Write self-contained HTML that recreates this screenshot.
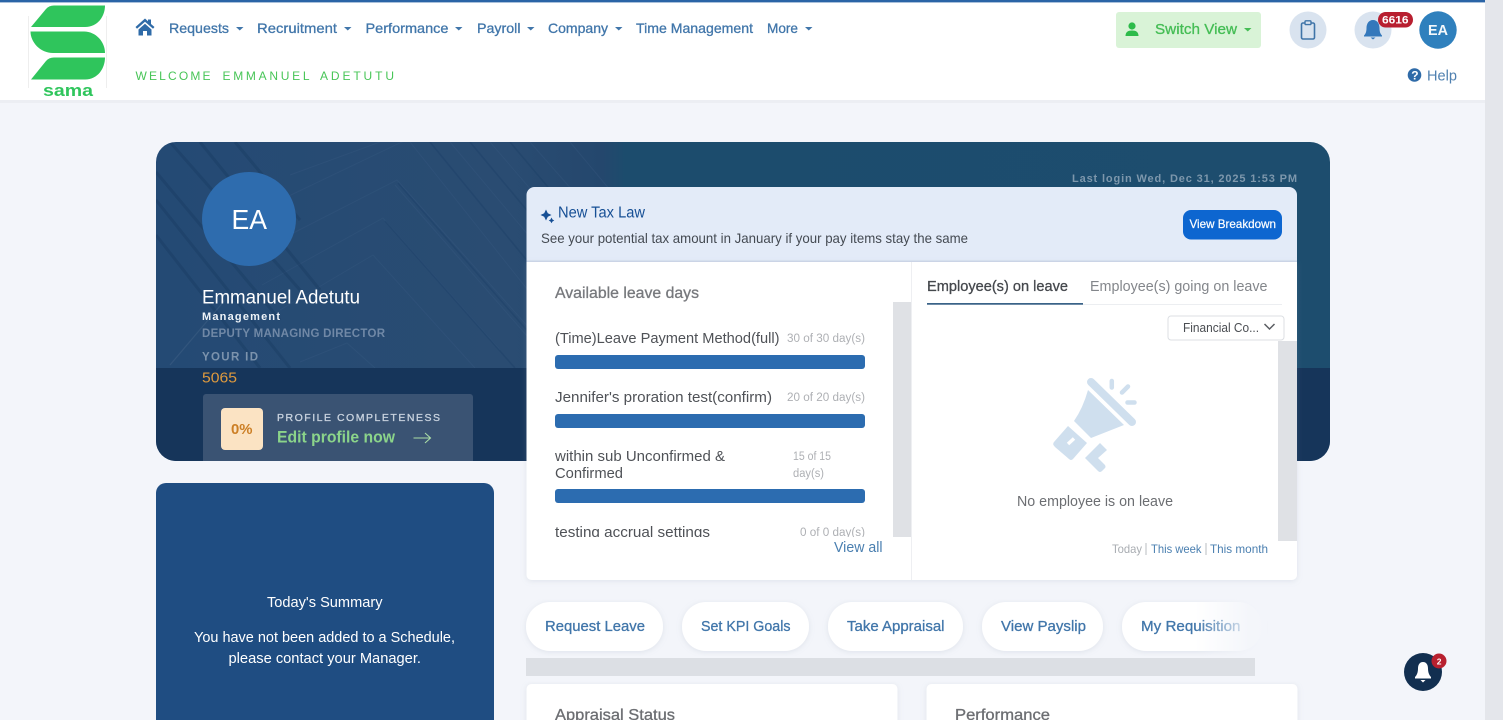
<!DOCTYPE html>
<html lang="en"><head><meta charset="utf-8"><title>Sama Dashboard</title>
<style>
html,body{margin:0;padding:0;width:1503px;height:720px;overflow:hidden;background:#f3f5fa}
svg{display:block;position:absolute;left:0;top:0}
text{font-family:"Liberation Sans",Arial,sans-serif;dominant-baseline:auto}
.m{stroke:currentColor;stroke-width:.3px}
.b{font-weight:bold}
</style></head><body>
<svg width="1503" height="720" viewBox="0 0 1503 720" xmlns="http://www.w3.org/2000/svg">
<defs>
<clipPath id="hero"><rect x="156" y="142" width="1174" height="319" rx="20"/></clipPath>
<clipPath id="list"><rect x="527" y="302" width="366" height="235"/></clipPath>
<clipPath id="pat"><path d="M156 142H605L660 210V368H156Z"/></clipPath>
<linearGradient id="fade" x1="0" x2="1" y1="0" y2="0"><stop offset="0" stop-color="#f3f5fa" stop-opacity="0"/><stop offset=".75" stop-color="#f3f5fa" stop-opacity=".9"/><stop offset="1" stop-color="#f3f5fa"/></linearGradient>
<linearGradient id="heroG" x1="0" x2="1" y1="0" y2="0"><stop offset="0" stop-color="#244a74"/><stop offset=".3" stop-color="#2a4c72"/><stop offset=".38" stop-color="#24476d"/><stop offset=".4" stop-color="#1c4c6d"/><stop offset="1" stop-color="#1d4d6e"/></linearGradient>
<filter id="sh" x="-5%" y="-5%" width="110%" height="115%"><feDropShadow dx="0" dy="1" stdDeviation="3" flood-color="#8a97ad" flood-opacity=".2"/></filter>
</defs>

<!-- page / scrollbar -->
<rect width="1503" height="720" fill="#f3f5fa"/>
<rect x="1485" width="18" height="720" fill="#e4e6eb"/>

<!-- top bar -->
<rect width="1485" height="100" fill="#fff"/>
<rect y="100" width="1485" height="3" fill="#eceef3"/>
<rect width="1485" height="2.4" fill="#2a64a6"/>

<!-- logo -->
<path d="M28.5 16V88M106.5 16V88" stroke="#eeeeee" stroke-width="1"/>
<path d="M31 27L46 9Q49 5.500 54 5.500H105C105 16 98 27 85 27Z" fill="#2fc55c"/>
<path d="M30.500 31.500H84C96 31.500 105 42 105 53H53C40 53 30.500 42 30.500 31.500Z" fill="#2fc55c"/>
<path d="M31 79.500L46 61Q49 57.500 54 57.500H105C105 68 98 79.500 85 79.500Z" fill="#2fc55c"/>
<text x="43" y="96" font-size="17" class="b" fill="#2fc55c" textLength="50" lengthAdjust="spacingAndGlyphs">sama</text>

<!-- nav -->
<path d="M145 18.500L135.500 27L137 28.700L145 21.700L153 28.700L154.500 27L151 24V19.500H148V21.300ZM138.500 29.500V35.500H143V31H147V35.500H151.500V29.500L145 23.700Z" fill="#2f6ba8"/>
<g font-size="14" fill="#4176aa" color="#4176aa" class="m">
<text x="169" y="33" textLength="60" lengthAdjust="spacingAndGlyphs">Requests</text>
<text x="257" y="33" textLength="80" lengthAdjust="spacingAndGlyphs">Recruitment</text>
<text x="365.500" y="33" textLength="83" lengthAdjust="spacingAndGlyphs">Performance</text>
<text x="477" y="33" textLength="43.500" lengthAdjust="spacingAndGlyphs">Payroll</text>
<text x="548" y="33" textLength="60" lengthAdjust="spacingAndGlyphs">Company</text>
<text x="636" y="33" textLength="117" lengthAdjust="spacingAndGlyphs">Time Management</text>
<text x="767" y="33" textLength="31" lengthAdjust="spacingAndGlyphs">More</text>
</g>
<g fill="#4176aa">
<path d="M236 27H243.500L239.750 30.500Z"/><path d="M344 27H351.500L347.750 30.500Z"/><path d="M455 27H462.500L458.750 30.500Z"/><path d="M527 27H534.500L530.750 30.500Z"/><path d="M615 27H622.500L618.750 30.500Z"/><path d="M805 27H812.500L808.750 30.500Z"/>
</g>
<g font-size="12" fill="#48c557">
<text x="135.500" y="80" textLength="75" lengthAdjust="spacing">WELCOME</text>
<text x="222.500" y="80" textLength="87" lengthAdjust="spacing">EMMANUEL</text>
<text x="320" y="80" textLength="74" lengthAdjust="spacing">ADETUTU</text>
</g>

<!-- header right -->
<rect x="1116" y="12" width="145" height="36" rx="3" fill="#d9f3d7"/>
<circle cx="1132" cy="26" r="3.600" fill="#2dbb4a"/>
<path d="M1125.500 36C1125.500 32 1128 30.500 1132 30.500S1138.500 32 1138.500 36Z" fill="#2dbb4a"/>
<text x="1155" y="34" font-size="14.500" fill="#45bd55" color="#45bd55" class="m" textLength="82" lengthAdjust="spacingAndGlyphs">Switch View</text>
<path d="M1244 28H1251.500L1247.750 31.500Z" fill="#45bd55"/>
<circle cx="1308" cy="30" r="18.500" fill="#d9e3ef"/>
<rect x="1301.500" y="23" width="13" height="16" rx="1.500" fill="none" stroke="#3f74a8" stroke-width="1.600"/>
<rect x="1305" y="20.800" width="6" height="3.800" rx="1" fill="#d9e3ef" stroke="#3f74a8" stroke-width="1.400"/>
<circle cx="1373" cy="30" r="18.500" fill="#d9e3ef"/>
<path d="M1373 20C1368.500 20 1366.500 24 1366.500 28C1366.500 32 1365.500 34 1364 35.500V36.500H1382V35.500C1380.500 34 1379.500 32 1379.500 28C1379.500 24 1377.500 20 1373 20Z" fill="#3478bb"/>
<path d="M1370.500 37.500H1375.500L1373 39.500Z" fill="#3478bb"/>
<rect x="1378" y="12" width="35" height="15.500" rx="7.700" fill="#b81f30"/>
<text x="1382" y="23.300" font-size="11" class="b" fill="#fff" textLength="26.500" lengthAdjust="spacingAndGlyphs">6616</text>
<circle cx="1438" cy="30" r="18.700" fill="#2f80bd"/>
<text x="1428" y="35" font-size="14.500" class="b" fill="#f4f8fb" textLength="20" lengthAdjust="spacingAndGlyphs">EA</text>
<circle cx="1414.500" cy="75" r="6.800" fill="#2f6ba8"/>
<text x="1411.200" y="79.500" font-size="12" class="b" fill="#fff">?</text>
<text x="1427" y="80.500" font-size="14.500" fill="#4f80b0" textLength="30" lengthAdjust="spacingAndGlyphs">Help</text>

<!-- hero -->
<g clip-path="url(#hero)">
<rect x="156" y="142" width="1174" height="319" fill="url(#heroG)"/>
<g clip-path="url(#pat)" fill="none">
<g stroke="#3c5d83" stroke-opacity=".3" stroke-width="1">
<path d="M260 250L397 180L540 340"/><path d="M262 285L383 218L500 350"/><path d="M280 310L373 255L475 368"/><path d="M300 362L347 343L375 368"/>
<path d="M270 205L406 140"/><path d="M290 175L380 142"/>
<path d="M410 142L590 368"/><path d="M450 142L640 368"/><path d="M490 142L660 340"/><path d="M530 142L660 290"/><path d="M570 142L660 250"/><path d="M395 185L555 368"/>
</g>
<g stroke="#173a60" stroke-opacity=".28" stroke-width="1.500">
<path d="M398 183L560 368"/><path d="M385 221L515 368"/><path d="M430 142L615 368"/><path d="M470 142L660 370"/><path d="M510 142L660 320"/>
</g>
<g stroke="#153458" stroke-opacity=".3" stroke-width="3">
<path d="M156 172L280 320"/><path d="M156 200L290 368"/><path d="M156 235L260 368"/><path d="M170 142L300 290"/><path d="M200 142L320 290"/><path d="M235 142L300 220"/>
</g>
<path d="M170 365L225 300" stroke="#5a7899" stroke-opacity=".25" stroke-width="1.200"/>
</g>
<rect x="156" y="368" width="1174" height="93" fill="#16355a"/>
<rect x="203" y="394" width="270" height="70" rx="3" fill="#3a5373"/>
</g>
<circle cx="249" cy="219" r="47" fill="#2e6cae"/>
<text x="231.500" y="229" font-size="28" fill="#fff" textLength="35.500" lengthAdjust="spacingAndGlyphs">EA</text>
<text x="202" y="303.500" font-size="19" fill="#fff" textLength="158" lengthAdjust="spacingAndGlyphs">Emmanuel Adetutu</text>
<text x="202" y="320" font-size="11" class="b" fill="#eef3f8" textLength="78" lengthAdjust="spacing">Management</text>
<text x="202" y="337" font-size="11.500" class="b" fill="#7088a6" textLength="183" lengthAdjust="spacing">DEPUTY MANAGING DIRECTOR</text>
<text x="202" y="360.500" font-size="11.500" class="b" fill="#7c93ad" textLength="56" lengthAdjust="spacing">YOUR ID</text>
<text x="202" y="382.500" font-size="14.500" fill="#df9a3e" textLength="35" lengthAdjust="spacingAndGlyphs">5065</text>
<rect x="221" y="408" width="42" height="42" rx="4" fill="#fbe3c3"/>
<text x="231" y="434" font-size="14.500" class="b" fill="#cc7f25" textLength="21.500" lengthAdjust="spacingAndGlyphs">0%</text>
<text x="277" y="421" font-size="10.500" fill="#c9d3df" color="#c9d3df" class="m" textLength="163" lengthAdjust="spacing">PROFILE COMPLETENESS</text>
<text x="277" y="442.500" font-size="16.500" class="b" fill="#8bd48a" textLength="118" lengthAdjust="spacingAndGlyphs">Edit profile now</text>
<path d="M413.500 438H430M425 433L430.500 438L425 443" fill="none" stroke="#a9dca6" stroke-width="1.100"/>
<text x="1072" y="182" font-size="11" class="b" fill="#7d97ac" textLength="225" lengthAdjust="spacing">Last login Wed, Dec 31, 2025 1:53 PM</text>

<!-- tax box -->
<path d="M526.500 262V195A8 8 0 0 1 534.500 187H1289A8 8 0 0 1 1297 195V262Z" fill="#e3ebf8"/>
<rect x="526.500" y="260.500" width="770.500" height="2" fill="#cfd9ea"/>
<path d="M546 209.500L547.800 213.200L551.500 215L547.800 216.800L546 220.500L544.200 216.800L540.500 215L544.200 213.200Z" fill="#164f95"/>
<path d="M551.500 217.500L552.500 219.500L554.300 220.500L552.500 221.500L551.500 223.300L550.500 221.500L548.700 220.500L550.500 219.500Z" fill="#164f95"/>
<text x="558" y="217.500" font-size="15.500" fill="#164f95" textLength="87" lengthAdjust="spacingAndGlyphs">New Tax Law</text>
<text x="541" y="243" font-size="14" fill="#444a52" textLength="427" lengthAdjust="spacingAndGlyphs">See your potential tax amount in January if your pay items stay the same</text>
<rect x="1183" y="210" width="99" height="29.500" rx="8" fill="#0d66d0"/>
<text x="1189.500" y="228" font-size="12" fill="#fff" color="#fff" class="m" style="stroke-width:.2px" textLength="86.500" lengthAdjust="spacingAndGlyphs">View Breakdown</text>

<!-- leave card -->
<path d="M526.500 262H1297V575A5 5 0 0 1 1292 580H531.500A5 5 0 0 1 526.500 575Z" fill="#fff" filter="url(#sh)"/>
<rect x="911" y="262" width="1" height="318" fill="#eeeff2"/>
<text x="555" y="298" font-size="15.500" fill="#77797d" color="#77797d" class="m" textLength="144" lengthAdjust="spacingAndGlyphs">Available leave days</text>
<rect x="893" y="302" width="18" height="235" fill="#dfe1e5"/>
<g clip-path="url(#list)">
<g font-size="15" fill="#4f5257">
<text x="555" y="343" textLength="224.500" lengthAdjust="spacingAndGlyphs">(Time)Leave Payment Method(full)</text>
<text x="555" y="402" textLength="217" lengthAdjust="spacingAndGlyphs">Jennifer's proration test(confirm)</text>
<text x="555" y="461" textLength="170" lengthAdjust="spacingAndGlyphs">within sub Unconfirmed &amp;</text>
<text x="555" y="478" textLength="68" lengthAdjust="spacingAndGlyphs">Confirmed</text>
<text x="555" y="537" textLength="155" lengthAdjust="spacingAndGlyphs">testing accrual settings</text>
</g>
<g font-size="11.500" fill="#aeb0b4">
<text x="787" y="342" textLength="78" lengthAdjust="spacingAndGlyphs">30 of 30 day(s)</text>
<text x="787" y="401" textLength="78" lengthAdjust="spacingAndGlyphs">20 of 20 day(s)</text>
<text x="793" y="460" textLength="38" lengthAdjust="spacingAndGlyphs">15 of 15</text>
<text x="793" y="477" textLength="31" lengthAdjust="spacingAndGlyphs">day(s)</text>
<text x="800" y="536" textLength="65" lengthAdjust="spacingAndGlyphs">0 of 0 day(s)</text>
</g>
<g fill="#2c6cb0">
<rect x="555" y="355" width="310" height="14" rx="3"/>
<rect x="555" y="414" width="310" height="14" rx="3"/>
<rect x="555" y="489" width="310" height="14" rx="3"/>
</g>
</g>
<text x="834" y="552" font-size="14.500" fill="#4a7fb0" textLength="48.500" lengthAdjust="spacingAndGlyphs">View all</text>

<!-- employee tabs -->
<text x="927" y="291" font-size="15" fill="#45484d" color="#45484d" class="m" textLength="141" lengthAdjust="spacingAndGlyphs">Employee(s) on leave</text>
<text x="1090" y="291" font-size="15" fill="#83868b" textLength="177.500" lengthAdjust="spacingAndGlyphs">Employee(s) going on leave</text>
<rect x="927" y="304" width="355" height="1" fill="#eceef1"/>
<rect x="927" y="303" width="156" height="1.700" fill="#3a6388"/>
<rect x="1278" y="341" width="19" height="200" fill="#dfe1e5"/>
<rect x="1168" y="316" width="116" height="24" rx="3" fill="#fff" stroke="#dcdfe3"/>
<text x="1183" y="332" font-size="13" fill="#4a4d52" textLength="76" lengthAdjust="spacingAndGlyphs">Financial Co...</text>
<path d="M1264.500 324L1269.500 329L1274.500 324" fill="none" stroke="#5a5d62" stroke-width="1.500"/>

<!-- megaphone -->
<g fill="#cfdfee">
<path d="M1091 382L1132 422" stroke="#cfdfee" stroke-width="8" stroke-linecap="round"/>
<path d="M1088 390L1124 425L1091 438L1074 421Q1083 408 1088 390Z"/>
<path d="M1068 426L1087 443L1073 459Q1071 461 1069 459L1055 447Q1052 444 1054 442Z"/>
<path d="M1100 443L1107 450L1098 458L1105 465Q1106 467 1105 468L1102 471Q1100 473 1098 471L1085 458Z"/>
<path d="M1111.800 381V387.500M1122 392.500L1128 386.500M1127.500 402.500H1134.500" stroke="#cfdfee" stroke-width="4.500" stroke-linecap="round" fill="none"/>
<path d="M1068 444L1074 438.500" stroke="#fff" stroke-width="3.500"/>
</g>
<text x="1017" y="506" font-size="15" fill="#6c6e72" textLength="156" lengthAdjust="spacingAndGlyphs">No employee is on leave</text>
<text x="1112" y="553" font-size="11.800" fill="#a9adb2" textLength="30" lengthAdjust="spacingAndGlyphs">Today</text>
<rect x="1145.500" y="543" width="1" height="12" fill="#b8bcc2"/>
<text x="1151" y="553" font-size="11.800" fill="#4a7fb0" textLength="50.500" lengthAdjust="spacingAndGlyphs">This week</text>
<rect x="1205.500" y="543" width="1" height="12" fill="#b8bcc2"/>
<text x="1210" y="553" font-size="11.800" fill="#4a7fb0" textLength="58" lengthAdjust="spacingAndGlyphs">This month</text>

<!-- quick actions -->
<g fill="#fff" filter="url(#sh)">
<rect x="526" y="602" width="137" height="49" rx="24"/>
<rect x="682" y="602" width="127" height="49" rx="24"/>
<rect x="828" y="602" width="135" height="49" rx="24"/>
<rect x="982" y="602" width="121" height="49" rx="24"/>
<rect x="1122" y="602" width="140" height="49" rx="24"/>
</g>
<g font-size="15" fill="#4176aa" color="#4176aa" class="m">
<text x="545" y="631" textLength="100" lengthAdjust="spacingAndGlyphs">Request Leave</text>
<text x="701" y="631" textLength="89.500" lengthAdjust="spacingAndGlyphs">Set KPI Goals</text>
<text x="847" y="631" textLength="97.500" lengthAdjust="spacingAndGlyphs">Take Appraisal</text>
<text x="1001" y="631" textLength="85" lengthAdjust="spacingAndGlyphs">View Payslip</text>
<text x="1141" y="631" textLength="99.500" lengthAdjust="spacingAndGlyphs">My Requisition</text>
</g>
<rect x="1195" y="594" width="72" height="63" fill="url(#fade)"/>
<rect x="526" y="658" width="729" height="18" fill="#dcdfe4"/>

<!-- bottom cards -->
<rect x="526.500" y="684" width="371" height="50" rx="5" fill="#fff" filter="url(#sh)"/>
<rect x="926.500" y="684" width="371" height="50" rx="5" fill="#fff" filter="url(#sh)"/>
<text x="555" y="720" font-size="15.500" fill="#6c6e72" color="#6c6e72" class="m" textLength="120" lengthAdjust="spacingAndGlyphs">Appraisal Status</text>
<text x="955" y="720" font-size="15.500" fill="#6c6e72" color="#6c6e72" class="m" textLength="95" lengthAdjust="spacingAndGlyphs">Performance</text>

<!-- summary panel -->
<path d="M156 733V493A10 10 0 0 1 166 483H484A10 10 0 0 1 494 493V733Z" fill="#1f4d82"/>
<text x="267" y="607" font-size="15" fill="#fff" textLength="115.500" lengthAdjust="spacingAndGlyphs">Today's Summary</text>
<text x="194" y="642" font-size="15" fill="#fff" textLength="261" lengthAdjust="spacingAndGlyphs">You have not been added to a Schedule,</text>
<text x="228.500" y="663" font-size="15" fill="#fff" textLength="192.500" lengthAdjust="spacingAndGlyphs">please contact your Manager.</text>

<!-- floating bell -->
<circle cx="1423" cy="672" r="19" fill="#122f50"/>
<path d="M1423 662C1419.500 662 1418 665 1418 668.500C1418 672 1417 675 1415 677V678.500H1431V677C1429 675 1428 672 1428 668.500C1428 665 1426.500 662 1423 662Z" fill="#fff"/>
<path d="M1420.500 680H1425.500L1423 682.500Z" fill="#fff"/>
<circle cx="1439" cy="661" r="7.500" fill="#b8202f"/>
<text x="1436.700" y="664.500" font-size="8.500" class="b" fill="#fff">2</text>
</svg>
</body></html>
